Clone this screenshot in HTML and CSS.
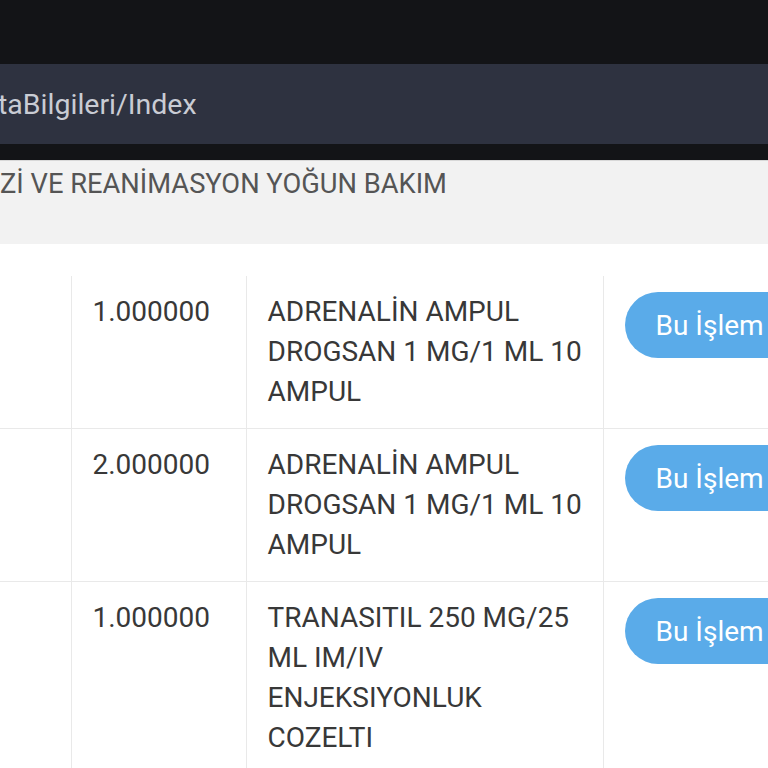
FILE: index.html
```html
<!DOCTYPE html>
<html lang="tr">
<head>
<meta charset="utf-8">
<title>Hasta Bilgileri</title>
<link rel="stylesheet" href="styles.css">
</head>
<body>
<div class="statusbar"></div>
<div class="urlbar"><span class="url">taBilgileri/Index</span></div>
<div class="strip"></div>
<div class="dept">Zİ VE REANİMASYON YOĞUN BAKIM</div>
<main class="content">
  <table class="grid">
    <colgroup>
      <col class="c0"><col class="c1"><col class="c2"><col class="c3">
    </colgroup>
    <tbody>
      <tr>
        <td></td>
        <td>1.000000</td>
        <td>ADRENALİN AMPUL<br>DROGSAN 1 MG/1 ML 10<br>AMPUL</td>
        <td><button class="btn">Bu İşlem</button></td>
      </tr>
      <tr>
        <td></td>
        <td>2.000000</td>
        <td>ADRENALİN AMPUL<br>DROGSAN 1 MG/1 ML 10<br>AMPUL</td>
        <td><button class="btn">Bu İşlem</button></td>
      </tr>
      <tr>
        <td></td>
        <td>1.000000</td>
        <td>TRANASITIL 250 MG/25<br>ML IM/IV<br>ENJEKSIYONLUK<br>COZELTI</td>
        <td><button class="btn">Bu İşlem</button></td>
      </tr>
    </tbody>
  </table>
</main>
</body>
</html>
```
FILE: styles.css
```css
html, body {
  margin: 0;
  padding: 0;
  overflow: hidden;
  background: #ffffff;
}
body {
  font-family: Roboto, "Noto Sans", "Liberation Sans", sans-serif;
  width: 768px;
  height: 768px;
}
.statusbar {
  height: 64px;
  background: #131417;
}
.urlbar {
  height: 80px;
  background: #2e3240;
  display: flex;
  align-items: center;
}
.url {
  margin-left: -2px;
  font-size: 28.5px;
  color: #c9ccd4;
  white-space: nowrap;
}
.strip {
  height: 16px;
  background: #131417;
  border-bottom: 1px solid #d8d8d8;
}
.dept {
  height: 83px;
  box-sizing: border-box;
  background: #f2f2f2;
  padding-top: 6px;
  font-size: 27.3px;
  line-height: 34px;
  color: #555555;
  white-space: nowrap;
}
.content {
  padding-top: 32px;
}
.grid {
  border-collapse: collapse;
  table-layout: fixed;
  width: 920px;
  font-size: 28px;
  line-height: 40px;
  color: #383838;
}
.c0 { width: 71px; }
.c1 { width: 175px; }
.c2 { width: 357px; }
.c3 { width: 317px; }
.grid td {
  vertical-align: top;
  padding: 16px 21px 16px;
  border-left: 1px solid #e9e9e9;
  border-top: 1px solid #e9e9e9;
  white-space: nowrap;
}
.grid td:first-child {
  border-left: none;
}
.grid tr:first-child td {
  border-top: none;
}
.btn {
  display: block;
  height: 66px;
  padding: 0 40px 0 31px;
  border: none;
  border-radius: 33px;
  background: #5aabe9;
  color: #ffffff;
  font-family: inherit;
  font-size: 28px;
  white-space: nowrap;
  width: 220px;
  text-align: left;
}
```
